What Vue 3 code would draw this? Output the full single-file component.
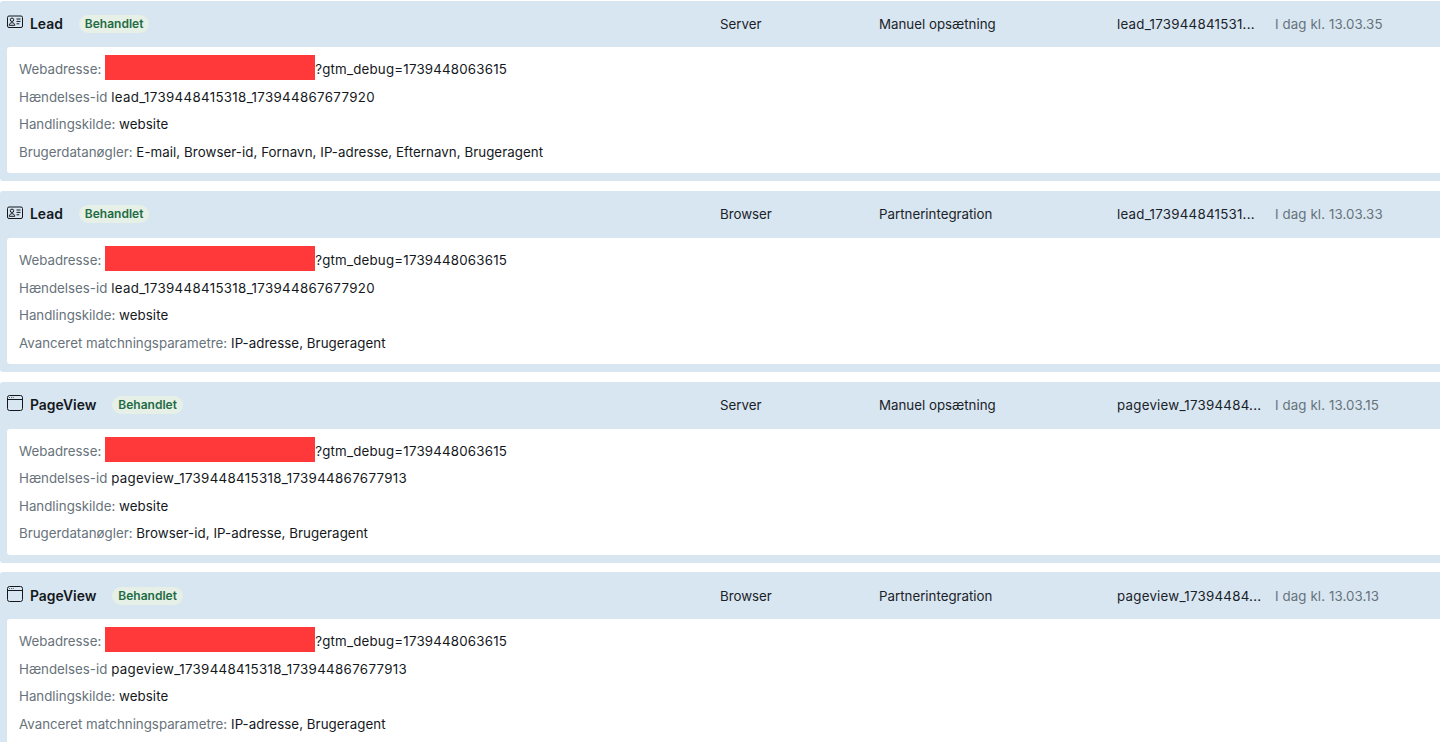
<script setup>
const events = [
  { name: 'Lead', icon: 'card', source: 'Server', setup: 'Manuel opsætning', short: 'lead_173944841531...', time: 'I dag kl. 13.03.35', id: 'lead_1739448415318_173944867677920', lastLabel: 'Brugerdatanøgler:', last: 'E-mail, Browser-id, Fornavn, IP-adresse, Efternavn, Brugeragent' },
  { name: 'Lead', icon: 'card', source: 'Browser', setup: 'Partnerintegration', short: 'lead_173944841531...', time: 'I dag kl. 13.03.33', id: 'lead_1739448415318_173944867677920', lastLabel: 'Avanceret matchningsparametre:', last: 'IP-adresse, Brugeragent' },
  { name: 'PageView', icon: 'window', source: 'Server', setup: 'Manuel opsætning', short: 'pageview_17394484...', time: 'I dag kl. 13.03.15', id: 'pageview_1739448415318_173944867677913', lastLabel: 'Brugerdatanøgler:', last: 'Browser-id, IP-adresse, Brugeragent' },
  { name: 'PageView', icon: 'window', source: 'Browser', setup: 'Partnerintegration', short: 'pageview_17394484...', time: 'I dag kl. 13.03.13', id: 'pageview_1739448415318_173944867677913', lastLabel: 'Avanceret matchningsparametre:', last: 'IP-adresse, Brugeragent' }
]
</script>

<template>
  <div class="list">
    <section v-for="(e, i) in events" :key="i" class="card">
      <header class="head">
        <div class="title">
          <svg v-if="e.icon === 'card'" class="icon" width="16" height="16" viewBox="0 0 16 16" fill="none" stroke="#14181c" stroke-width="1">
            <rect x="0.5" y="2" width="15" height="11.5" rx="1.5" />
            <circle cx="5" cy="5.8" r="1.7" />
            <path d="M2.2 11.3c.2-1.8 1.3-2.6 2.8-2.6s2.6.8 2.8 2.6z" />
            <path d="M9.5 5h4M9.5 7.4h4M9.5 9.8h2.8" />
          </svg>
          <svg v-else class="icon" width="16" height="16" viewBox="0 0 16 16" fill="none" stroke="#14181c" stroke-width="1">
            <rect x="0.5" y="0.5" width="15" height="15" rx="2" />
            <path d="M0.5 4.5h15" />
            <path d="M2.2 2.5h.8M4 2.5h.8M5.8 2.5h.8" stroke-width="0.8" />
          </svg>
          <span class="name">{{ e.name }}</span>
          <span class="badge">Behandlet</span>
        </div>
        <span class="c-source">{{ e.source }}</span>
        <span class="c-setup">{{ e.setup }}</span>
        <span class="c-short">{{ e.short }}</span>
        <span class="c-time">{{ e.time }}</span>
      </header>
      <div class="body">
        <div class="row"><span class="lbl">Webadresse:</span><span class="redact"></span><span class="num">?gtm_debug=1739448063615</span></div>
        <div class="row"><span class="lbl">Hændelses-id</span><span class="num num-id">{{ e.id }}</span></div>
        <div class="row"><span class="lbl">Handlingskilde:</span><span class="val">website</span></div>
        <div class="row"><span class="lbl">{{ e.lastLabel }}</span><span class="val">{{ e.last }}</span></div>
      </div>
    </section>
  </div>
</template>

<style>
html, body { margin: 0; background: #fff; overflow: hidden; }
</style>

<style scoped>
.list {
  height: 742px;
  overflow: hidden;
  padding-top: 0.6px;
  box-sizing: border-box;
  font-family: Inter, "Liberation Sans", sans-serif;
  font-size: 13.3px;
  color: #1a2229;
}
.card {
  background: #d8e6f1;
  border-radius: 3px 0 0 3px;
  padding-bottom: 8px;
  margin-bottom: 9.75px;
}
.head {
  height: 46.35px;
  padding-bottom: 0.5px;
  display: flex;
  align-items: center;
  padding-left: 7px;
}
.title {
  width: 713px;
  display: flex;
  align-items: center;
}
.icon { flex: none; margin-top: -3px; }
.name {
  margin-left: 7px;
  font-size: 13.9px;
  font-weight: 600;
  color: #14181c;
}
.badge {
  margin-left: 16px;
  padding: 0 6px;
  height: 18px;
  line-height: 18px;
  border-radius: 9px;
  background: #e6f0e6;
  color: #1f6b45;
  font-size: 12px;
  font-weight: 600;
}
.c-source { width: 159px; }
.c-setup { width: 238px; }
.c-short { width: 158px; white-space: nowrap; letter-spacing: 0.25px; }
.c-time { color: #67727a; white-space: nowrap; letter-spacing: 0.1px; }
.body {
  background: #fff;
  margin-left: 7px;
  border-radius: 3px 0 0 3px;
  padding: 8px 12px 8px;
}
.row {
  height: 27.5px;
  line-height: 28.5px;
  display: flex;
  white-space: pre;
}
.lbl { color: #67727a; margin-right: 3.8px; }
.val { color: #14181c; letter-spacing: 0.06px; }
.num { color: #14181c; letter-spacing: 0.2px; }
.num-id { letter-spacing: 0.33px; }
.redact {
  width: 210.2px;
  height: 25px;
  background: #ff3939;
}
</style>
